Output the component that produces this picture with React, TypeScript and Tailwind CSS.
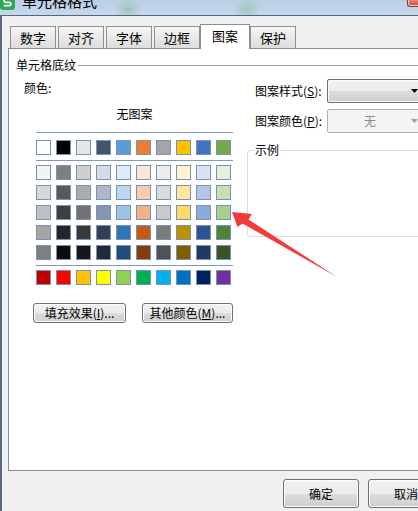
import type { ReactNode } from 'react'

const FONT = { fontFamily: '"Noto Sans CJK SC", "Noto Sans", sans-serif' }

const TABS = ['数字', '对齐', '字体', '边框', '图案', '保护']
const ACTIVE_TAB = '图案'

const THEME_ROW = ['#ffffff', '#000000', '#e7e6e6', '#44546a', '#5b9bd5', '#ed7d31', '#a5a5a5', '#ffc000', '#4472c4', '#70ad47']

const SHADE_ROWS = [
  ['#f2f2f2', '#7f7f7f', '#d0cece', '#d6dce4', '#deebf6', '#fbe5d5', '#ededed', '#fff2cc', '#dae3f3', '#e2efd9'],
  ['#d8d8d8', '#595959', '#aeabab', '#adb9ca', '#bdd7ee', '#f7cbac', '#dbdbdb', '#fee599', '#b4c6e7', '#c5e0b3'],
  ['#bfbfbf', '#3f3f3f', '#757070', '#8496b0', '#9dc3e6', '#f4b183', '#c9c9c9', '#ffd965', '#8eaadb', '#a8d08d'],
  ['#a5a5a5', '#262626', '#3a3838', '#333f4f', '#2e75b5', '#c55a11', '#7b7b7b', '#bf9000', '#2f5496', '#538135'],
  ['#7f7f7f', '#0c0c0c', '#171616', '#222a35', '#1e4e79', '#843c0b', '#525252', '#7f6000', '#1f3864', '#375623'],
]

const STANDARD_ROW = ['#c00000', '#ff0000', '#ffc000', '#ffff00', '#92d050', '#00b050', '#00b0f0', '#0070c0', '#002060', '#7030a0']

function Swatch({ color }: { color: string }) {
  return <div className="w-[15px] h-[15px] border border-[#7893b6]" style={{ backgroundColor: color }} />
}

function SwatchRow({ colors }: { colors: string[] }) {
  return (
    <div className="grid grid-cols-10 gap-x-[5px] w-[195px]">
      {colors.map((c, i) => (
        <Swatch key={i} color={c} />
      ))}
    </div>
  )
}

function Divider() {
  return <div className="h-px w-[197px] bg-[#7f9cba]" />
}

function WinButton({ children, className = '' }: { children: ReactNode; className?: string }) {
  return (
    <div
      className={`flex items-center justify-center rounded-[3px] border border-[#707070] bg-[linear-gradient(#f2f2f2_0%,#ebebeb_50%,#dddddd_50%,#cfcfcf_100%)] shadow-[inset_0_0_0_1px_#fbfbfb] text-[12px] text-black ${className}`}
    >
      {children}
    </div>
  )
}

export default function App() {
  return (
    <div className="relative w-[418px] h-[511px] overflow-hidden bg-[#f0f0f0]" style={FONT}>
      {/* window title bar */}
      <div className="flex h-[16px] border-b border-[#566577] bg-[radial-gradient(ellipse_14px_12px_at_128px_9px,#9fc7b8,transparent),radial-gradient(ellipse_14px_12px_at_247px_9px,#a2c8bb,transparent),linear-gradient(#b9cee5,#c6d8eb)]">
        <svg width="15" height="15" viewBox="0 0 15 15" className="-mt-[5px] shrink-0">
          <rect x="0" y="0" width="15" height="15" rx="3" fill="#2fa84f" />
          <path d="M11 4.2H5.6a1.6 1.6 0 0 0 0 3.2h3.8a1.6 1.6 0 0 1 0 3.2H3.8" stroke="#fff" strokeWidth="1.6" fill="none" />
        </svg>
        <span className="ml-[7px] -mt-[7px] text-[15px] leading-[15px] text-black">单元格格式</span>
        <div className="ml-auto w-[11px] h-[7px] rounded-bl-[3px] border-l border-b border-[#7d3a33] bg-[linear-gradient(#e0897c,#c4473a)] shadow-[inset_1px_-1px_0_#f3c4bd]" />
      </div>

      <div className="h-[495px] border-l-2 border-[#5a697c]">
        {/* tab strip */}
        <div className="flex items-end gap-[2px] h-[32px] pl-[8px]">
          {TABS.map(t =>
            t === ACTIVE_TAB ? (
              <div
                key={t}
                className="relative z-10 -mx-[2px] -mb-px w-[50px] h-[25px] border border-b-0 border-[#898c95] bg-white flex items-start justify-center pt-[3px] text-[13px] leading-[16px] text-black"
              >
                {t}
              </div>
            ) : (
              <div
                key={t}
                className="w-[46px] h-[22px] border border-b-0 border-[#8e9096] bg-[linear-gradient(#f6f6f6,#dcdcdc)] flex items-start justify-center pt-[3px] text-[13px] leading-[16px] text-black"
              >
                {t}
              </div>
            )
          )}
        </div>

        {/* tab page */}
        <div className="ml-[6px] w-[480px] h-[423px] border border-[#898c95] bg-white text-[12px] leading-[14px] text-black">
          <div className="flex items-center mt-[9px] pl-[7px]">
            <span>单元格底纹</span>
            <div className="ml-[2px] flex-1 h-px bg-[#a0a0a0]" />
          </div>

          <div className="flex">
            {/* colour picker */}
            <div className="w-[238px] shrink-0">
              <div className="mt-[9px] pl-[15px]">颜色:</div>
              <div className="ml-[27px] w-[197px]">
                <div className="mt-[12px] text-center">无图案</div>
                <div className="mt-[11px]">
                  <Divider />
                </div>
                <div className="mt-[7px]">
                  <SwatchRow colors={THEME_ROW} />
                </div>
                <div className="mt-[5px]">
                  <Divider />
                </div>
                <div className="mt-[4px] flex flex-col gap-[5px]">
                  {SHADE_ROWS.map((row, i) => (
                    <SwatchRow key={i} colors={row} />
                  ))}
                </div>
                <div className="mt-[5px]">
                  <Divider />
                </div>
                <div className="mt-[4px]">
                  <SwatchRow colors={STANDARD_ROW} />
                </div>
              </div>
              <div className="mt-[18px] ml-[24px] flex gap-[16px]">
                <WinButton className="w-[93px] h-[20px]">
                  填充效果(<span className="underline">I</span>)...
                </WinButton>
                <WinButton className="w-[91px] h-[20px]">
                  其他颜色(<span className="underline">M</span>)...
                </WinButton>
              </div>
            </div>

            {/* pattern options */}
            <div className="flex-1">
              <div className="mt-[7px] flex items-center h-[24px] pl-[8px]">
                <span className="w-[72px] shrink-0">
                  图案样式(<span className="underline">S</span>):
                </span>
                <div className="relative w-[98px] h-[24px] rounded-[2px] border border-[#707070] bg-[linear-gradient(#f2f2f2_0%,#ebebeb_50%,#dddddd_50%,#cfcfcf_100%)] shadow-[inset_0_0_0_1px_#fafafa]">
                  <svg width="7" height="4" viewBox="0 0 7 4" className="absolute right-[6px] top-[9px]">
                    <path d="M0 0h7L3.5 4z" fill="#000" />
                  </svg>
                </div>
              </div>
              <div className="mt-[6px] flex items-center h-[24px] pl-[8px]">
                <span className="w-[72px] shrink-0">
                  图案颜色(<span className="underline">P</span>):
                </span>
                <div className="relative w-[98px] h-[24px] rounded-[2px] border border-[#adb2b5] bg-[#f4f4f4] flex items-center pl-[36px] text-[#8d8d8d]">
                  无
                  <svg width="7" height="4" viewBox="0 0 7 4" className="absolute right-[6px] top-[9px]">
                    <path d="M0 0h7L3.5 4z" fill="#a0a0a0" />
                  </svg>
                </div>
              </div>
              <fieldset className="mt-[10px] w-[190px] h-[94px] rounded-[3px] border border-[#d5dfe5]">
                <legend className="ml-[6px] px-[1px] leading-[14px]">示例</legend>
              </fieldset>
            </div>
          </div>
        </div>

        {/* dialog buttons */}
        <div className="mt-[8px] ml-[281px] flex gap-[9px]">
          <WinButton className="w-[76px] h-[29px] shrink-0 border-[#3c7fb1] shadow-[inset_0_0_0_1px_#8fdcf7]">确定</WinButton>
          <WinButton className="w-[76px] h-[29px] shrink-0">取消</WinButton>
        </div>
      </div>

      {/* red pointer arrow */}
      <svg className="pointer-events-none absolute left-0 top-0" width="418" height="511" viewBox="0 0 418 511">
        <polygon points="232,212 252,214 248.5,219.5 337,277 242.5,223.5 237.5,227" fill="#f33b3b" />
      </svg>
    </div>
  )
}
